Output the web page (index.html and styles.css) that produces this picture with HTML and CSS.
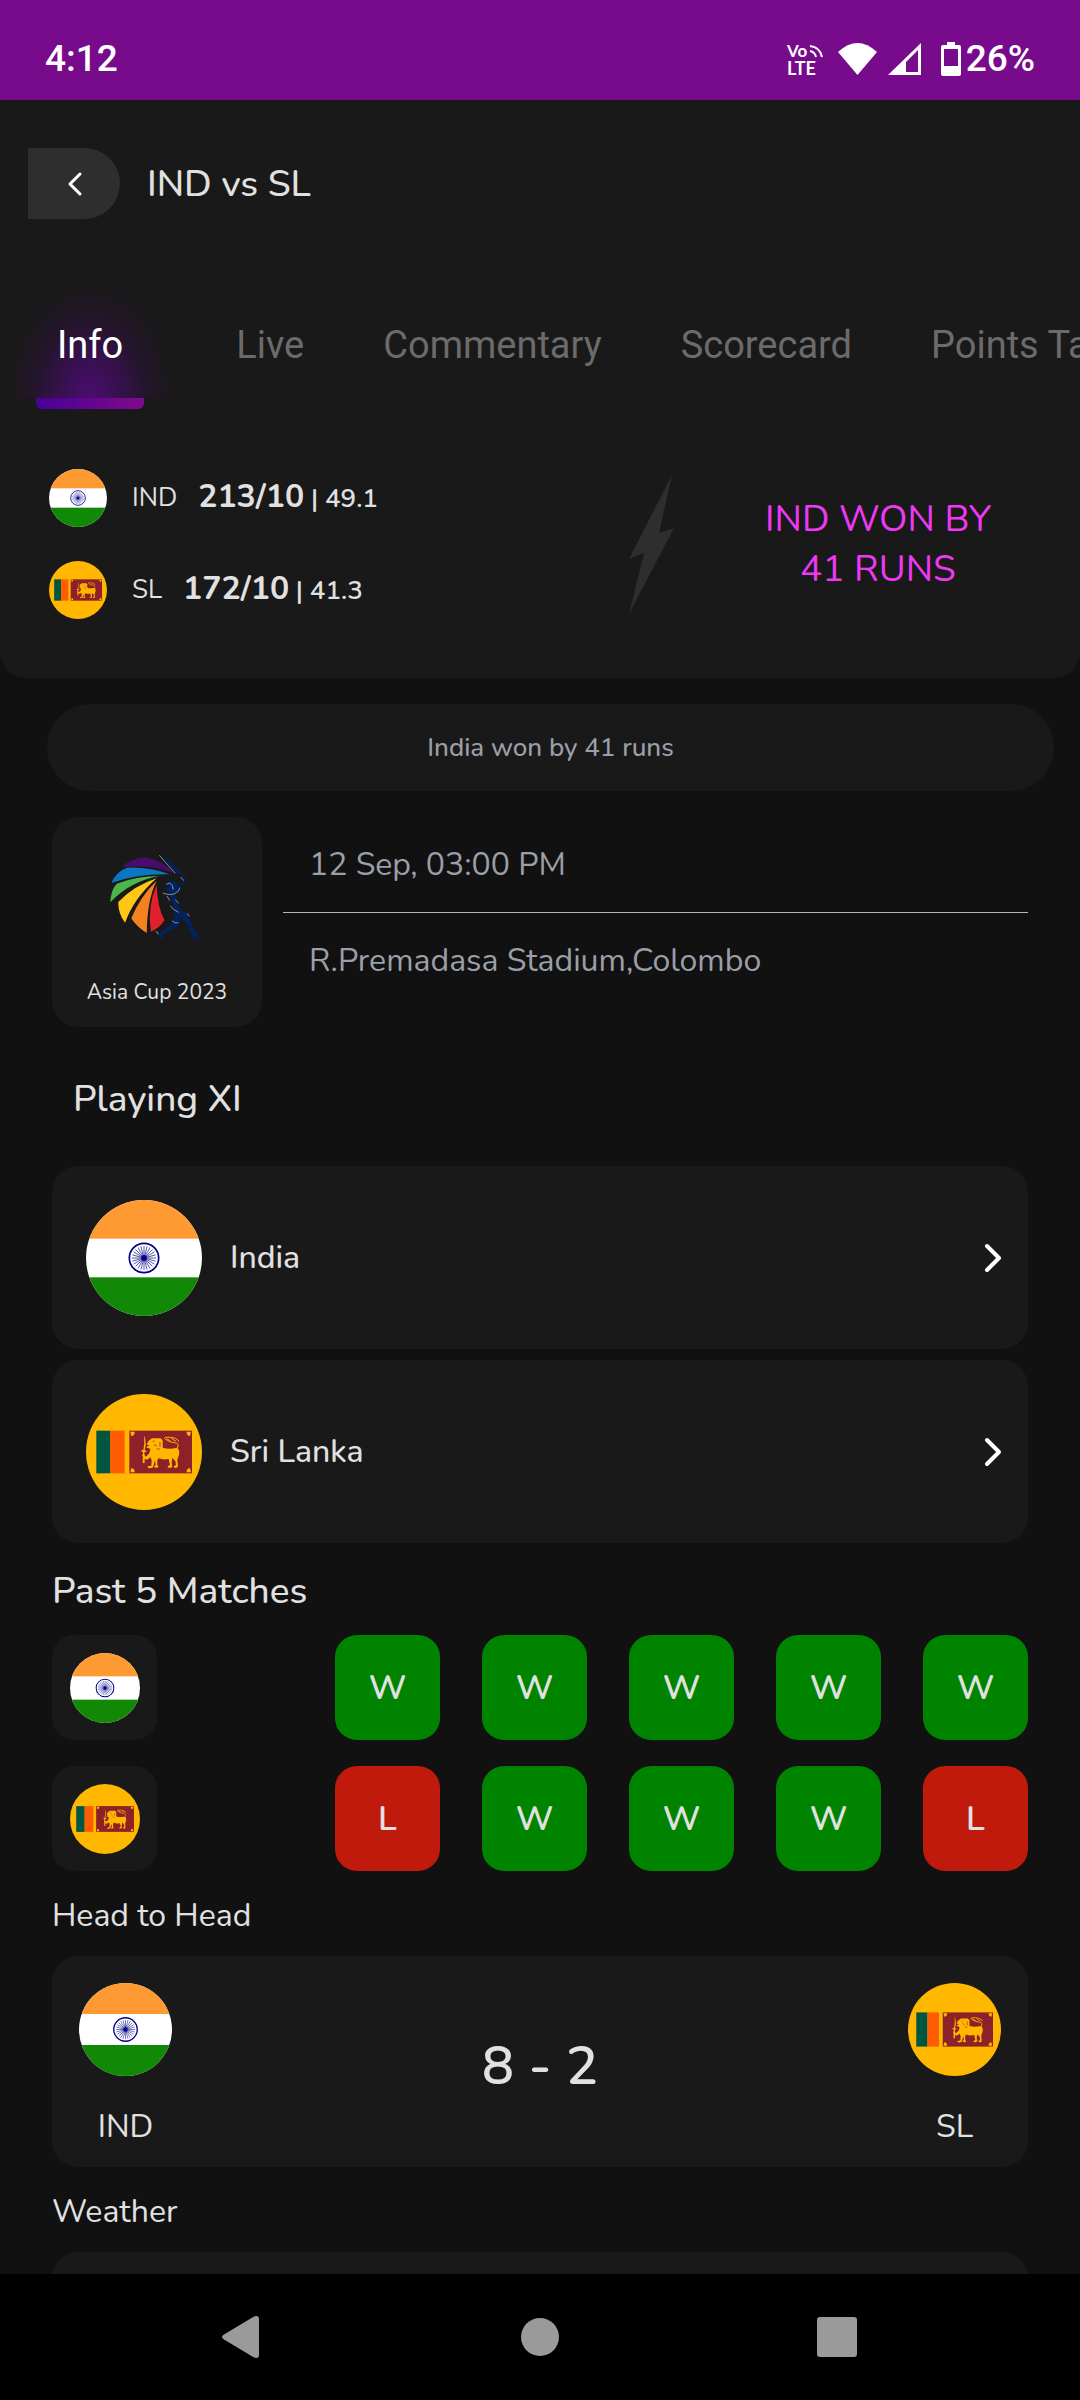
FILE: index.html
```html
<!DOCTYPE html>
<html lang="en">
<head>
<meta charset="utf-8">
<meta name="viewport" content="width=device-width, initial-scale=1">
<title>IND vs SL</title>
<link rel="stylesheet" href="styles.css">
</head>
<body>
<svg class="sprite" aria-hidden="true">
  <symbol id="flag-ind" viewBox="0 0 348 348">
    <clipPath id="round"><circle cx="174" cy="174" r="174"/></clipPath>
    <g clip-path="url(#round)">
      <rect width="348" height="348" fill="#fff"/>
      <rect width="348" height="116" fill="#ff9a33"/>
      <rect y="232" width="348" height="116" fill="#128807"/>
    </g>
    <g fill="none" stroke="#000088">
      <circle cx="174" cy="174" r="44" stroke-width="5"/>
      <path stroke-width="2" d="M138 174H210M174 138V210M139.200 164.700L208.800 183.300M142.800 156L205.200 192M148.500 148.500L199.500 199.500M156 142.800L192 205.200M164.700 139.200L183.300 208.800M183.300 139.200L164.700 208.800M192 142.800L156 205.200M199.500 148.500L148.500 199.500M205.200 156L142.800 192M208.800 164.700L139.200 183.300"/>
    </g>
    <circle cx="174" cy="174" r="8" fill="#000088"/>
  </symbol>
  <symbol id="flag-sl" viewBox="0 0 348 348">
    <circle cx="174" cy="174" r="174" fill="#ffb700"/>
    <rect x="31" y="110" width="42" height="128" fill="#005641"/>
    <rect x="73" y="110" width="43" height="128" fill="#ff5b00"/>
    <rect x="130" y="110" width="188" height="128" fill="#8d2029"/>
    <g fill="#ffb700">
      <path d="M133 113h13q1 12-10 13zM315 113h-13q-1 12 10 13zM133 235h13q1-12-10-13zM315 235h-13q-1-12 10-13z"/>
      <path d="M174 124q9 22 2 45l5 1v4l-6 1 1 32h-6l1-32-5-3 1-4 5 0q5-20 2-44z"/>
      <path d="M188 140l10-7 26 0 6 6 0 22q18 6 44 0 8 8 5 22l-5 14 2 20q-2 6-12 4v-5l6-3-2-12-9-9-2 14 2 12q-4 5-14 3l1-5 6-3-4-18q-18 3-30-2l-4 6v14l4 6q-6 4-14 1l2-5 3-2-2-14-4 14q0 9-8 9-8 2-11-2l4-4 8-1 1-16-4-9-10 7-10-3-5-12 6-1 5 7 10-9 4-11-3-5-9-2 3-4 6-2-8-4z"/>
    </g>
    <path d="M274 162q8-14-8-16-14-1-22-7-14-6-6-9 16-2 30 3 10 4 10 10M242 134l12 7M256 133l14 9" fill="none" stroke="#ffb700" stroke-width="3"/>
    <path d="M200 142h6M204 152l8 4M212 164l10 2M222 144v14" fill="none" stroke="#8d2029" stroke-width="2"/>
  </symbol>
</svg>

<div class="app">
  <header class="status">
    <span>4:12</span>
    <span class="status-icons">
      <svg class="volte" viewBox="0 0 36 32" aria-hidden="true">
        <g fill="#fff" font-family="Lato, sans-serif" font-weight="700"><text x="0" y="14" font-size="17">Vo</text><text x="0" y="32" font-size="18">LTE</text></g>
        <g fill="none" stroke="#fff" stroke-width="2"><path d="M23 8q5 1 6 6M23 3q10 1 12 11"/></g>
      </svg>
      <svg class="wifi" viewBox="0 0 39 32" aria-hidden="true"><path fill="#fff" d="M0 9Q19.500-9 39 9L19.500 32z"/></svg>
      <svg class="signal" viewBox="0 0 33 32" aria-hidden="true"><path fill="#fff" fill-rule="evenodd" d="M33 0V32H0zM30 7L18 19V29H30z"/></svg>
      <svg class="battery" viewBox="0 0 20 34" aria-hidden="true"><path fill="#fff" fill-rule="evenodd" d="M6 0h8v3h4q2 0 2 2v27q0 2-2 2H2q-2 0-2-2V5q0-2 2-2h4zM3 7v17h14V7z"/></svg>
      <span>26%</span>
    </span>
  </header>

  <div class="scroll">
    <section class="top">
      <div class="titlebar">
        <button class="back" aria-label="Back"><svg viewBox="0 0 14 22" aria-hidden="true"><path d="M12 1L2 11l10 10" fill="none" stroke="#fff" stroke-width="3" stroke-linecap="round" stroke-linejoin="round"/></svg></button>
        <h1>IND vs SL</h1>
      </div>
      <nav class="tabs" role="tablist">
        <button class="tab active" role="tab" aria-selected="true">Info</button>
        <button class="tab" role="tab">Live</button>
        <button class="tab" role="tab">Commentary</button>
        <button class="tab" role="tab">Scorecard</button>
        <button class="tab" role="tab">Points Table</button>
      </nav>
      <div class="summary">
        <div class="scores">
          <div class="score"><svg class="flag" role="img" aria-label="India"><use href="#flag-ind"/></svg><span class="code">IND</span><span><b>213/10</b> <span class="overs">| 49.1</span></span></div>
          <div class="score"><svg class="flag" role="img" aria-label="Sri Lanka"><use href="#flag-sl"/></svg><span class="code">SL</span><span><b>172/10</b> <span class="overs">| 41.3</span></span></div>
        </div>
        <svg class="bolt" viewBox="0 0 45 139" aria-hidden="true"><path d="M43 0L30 58 45 53 0 139 15 78 0 84z" fill="#2e2e2e"/></svg>
        <p class="result">IND WON BY 41 RUNS</p>
      </div>
    </section>

    <p class="pill">India won by 41 runs</p>

    <main class="content">
      <section class="match">
        <div class="series">
          <svg viewBox="322 160 274 258" preserveAspectRatio="none" aria-hidden="true">
            <path fill="#4b0b6b" d="M358 201Q384 173 430 174 476 182 510 221 448 194 358 201z"/>
            <path fill="#0b77c4" d="M326 250Q340 215 372 204 440 202 496 224 400 222 326 250z"/>
            <path fill="#4cb748" d="M323 308Q324 270 342 252 398 229 466 229 380 245 323 308z"/>
            <path fill="#ffc615" d="M346 307Q392 258 458 236 392 295 366 369 346 344 346 307z"/>
            <path fill="#f58220" d="M384 356Q410 290 458 243 430 300 429 400 400 382 384 356z"/>
            <path fill="#e0202a" d="M441 396Q430 320 458 255 460 322 481 362 466 386 441 396z"/>
            <path fill="#04215a" d="M464 164q8 1 16 12l34 43 8 3q9-5 10 2l2 10 8 9-8 2-5 12-4 17-15 9 7 16 0 12 12 20 20 12 8 22 14 28 8 21 19 6v3h-34l-4-3 2-7-13-36-20-22-4 1-1 19-11 9-36 20-1 15-6 2-8-19 10-6 34-28 7-32-10-26-6-28-12-11 1-16 10-10 17 0 7 8 6 8 14-10 4-14-8-13-42-44z"/>
            <path d="M466 167l46 54M528 232l9 11M476 280q20 8 34 2 14-6 16-18M486 254q10-8 18 4l2 12M496 303l-8-14M498 318q6 12 24 20M512 300l10 11M546 342l8 7M503 363q8 10 18 6M455 396q8 0 7 8" fill="none" stroke="#b8c9e6" stroke-width="2"/>
          </svg>
          <span>Asia Cup 2023</span>
        </div>
        <div class="facts"><p>12 Sep, 03:00 PM</p><p>R.Premadasa Stadium,Colombo</p></div>
      </section>

      <h2 class="inset">Playing XI</h2>
      <a class="card team" href="#india"><svg class="flag" aria-hidden="true"><use href="#flag-ind"/></svg><span>India</span><svg class="chevron" viewBox="0 0 18 30" aria-hidden="true"><path d="M3 3L15 15 3 27" fill="none" stroke="#fff" stroke-width="4" stroke-linecap="round" stroke-linejoin="round"/></svg></a>
      <a class="card team" href="#sri-lanka"><svg class="flag" aria-hidden="true"><use href="#flag-sl"/></svg><span>Sri Lanka</span><svg class="chevron" viewBox="0 0 18 30" aria-hidden="true"><path d="M3 3L15 15 3 27" fill="none" stroke="#fff" stroke-width="4" stroke-linecap="round" stroke-linejoin="round"/></svg></a>

      <h2>Past 5 Matches</h2>
      <div class="form">
        <div class="badge"><svg class="flag" role="img" aria-label="India"><use href="#flag-ind"/></svg></div>
        <ol><li>W</li><li>W</li><li>W</li><li>W</li><li>W</li></ol>
      </div>
      <div class="form">
        <div class="badge"><svg class="flag" role="img" aria-label="Sri Lanka"><use href="#flag-sl"/></svg></div>
        <ol><li class="loss">L</li><li>W</li><li>W</li><li>W</li><li class="loss">L</li></ol>
      </div>

      <h3>Head to Head</h3>
      <section class="card versus">
        <div class="side"><svg class="flag" aria-hidden="true"><use href="#flag-ind"/></svg><span>IND</span></div>
        <strong>8 - 2</strong>
        <div class="side"><svg class="flag" aria-hidden="true"><use href="#flag-sl"/></svg><span>SL</span></div>
      </section>

      <h3>Weather</h3>
      <section class="card weather"></section>
    </main>
  </div>

  <nav class="system">
    <button aria-label="Back"><svg viewBox="0 0 42 42" aria-hidden="true"><path d="M2 18.500Q-2 21 2 23.500L32 41.500Q37 43 37 39V3Q37-1 32 .5z" fill="#9a9a9a"/></svg></button>
    <button aria-label="Home"><svg viewBox="0 0 42 42" aria-hidden="true"><circle cx="21" cy="21" r="19" fill="#9a9a9a"/></svg></button>
    <button aria-label="Recent apps"><svg viewBox="0 0 42 42" aria-hidden="true"><rect x="1" y="1" width="40" height="40" rx="3" fill="#9a9a9a"/></svg></button>
  </nav>
</div>
</body>
</html>
```
FILE: styles.css
```css
* { box-sizing: border-box; }
body, h1, h2, h3, p, ol { margin: 0; padding: 0; }
body {
  background: #111;
  color: #e1e1e1;
  font-family: Nunito, Lato, sans-serif;
  font-size: 32px;
  line-height: 44px;
}
h1, h2 { font-size: 37px; font-weight: 500; line-height: 52px; }
h3 { font-size: 32px; font-weight: 400; line-height: 44px; }
button { border: 0; padding: 0; background: none; color: inherit; font: inherit; }
a { color: inherit; text-decoration: none; }
svg { display: block; flex: none; }
.sprite { position: absolute; width: 0; height: 0; }

.app { display: flex; flex-direction: column; height: 100vh; }
.scroll { flex: 1; min-height: 0; overflow-y: auto; overflow-x: hidden; scrollbar-width: none; }

.status {
  display: flex;
  justify-content: space-between;
  align-items: flex-end;
  flex: none;
  height: 100px;
  padding: 0 45px 20px;
  background: #780b8c;
  color: #fff;
  font: 500 37px/42px Roboto, sans-serif;
}
.status-icons { display: flex; align-items: center; }
.volte { width: 36px; height: 32px; margin-right: 15px; overflow: visible; }
.wifi { width: 39px; height: 32px; margin-right: 11px; }
.signal { width: 33px; height: 32px; margin-right: 20px; }
.battery { width: 20px; height: 34px; margin-right: 5px; }

.top { background: #191919; border-radius: 0 0 26px 26px; padding-bottom: 59px; }
.titlebar { display: flex; align-items: center; gap: 27px; padding: 48px 28px 0; }
.back {
  display: flex;
  justify-content: flex-end;
  align-items: center;
  width: 92px;
  height: 71px;
  padding-right: 38px;
  background: #2e2e2e;
  border-radius: 0 36px 36px 0;
}
.back svg { width: 14px; height: 22px; overflow: visible; }

.tabs { display: flex; gap: 37px; height: 190px; padding-left: 36px; overflow: hidden; }
.tab {
  position: relative;
  flex: none;
  padding: 62px 21px 0;
  color: #6b6b6b;
  font: 400 38px/44px Roboto, sans-serif;
  white-space: nowrap;
}
.active { margin-right: 34px; color: #fff; isolation: isolate; }
.active::before {
  content: "";
  position: absolute;
  z-index: -1;
  left: -36px;
  right: -36px;
  bottom: 11px;
  height: 120px;
  background: radial-gradient(ellipse 84px 116px at 50% 100%, #4b0d70 0, #3a1055 30%, #24152c 65%, #191919 100%);
}
.active::after {
  content: "";
  position: absolute;
  left: 0;
  right: 0;
  bottom: 0;
  height: 11px;
  border-radius: 0 0 6px 6px;
  background: linear-gradient(90deg, #480096, #7e0b8b);
}

.summary { display: flex; align-items: center; padding: 60px 48px 0 49px; }
.scores { display: flex; flex-direction: column; gap: 34px; flex: 1; }
.score { display: flex; align-items: center; font-size: 26px; white-space: nowrap; }
.score .flag { width: 58px; height: 58px; margin-right: 25px; }
.code { margin-right: 21px; }
.score b { font-size: 32px; }
.overs { font-weight: 600; }
.bolt { width: 45px; height: 139px; }
.result { width: 244px; margin: 0 32px 0 82px; color: #ee38f5; font-size: 37px; line-height: 50px; text-align: center; }

.pill {
  margin: 26px 26px 0 47px;
  padding: 25px;
  background: #191919;
  border-radius: 44px;
  color: #9a9fa8;
  font-size: 26px;
  font-weight: 500;
  line-height: 37px;
  text-align: center;
}
.content { padding: 26px 52px 0; }
.match { display: flex; gap: 21px; }
.series {
  display: flex;
  flex-direction: column;
  align-items: center;
  flex: none;
  width: 210px;
  height: 210px;
  padding-top: 36px;
  background: #191919;
  border-radius: 26px;
  font-size: 21px;
  line-height: 30px;
}
.series svg { width: 94px; height: 86px; margin-bottom: 38px; }
.facts { flex: 1; color: #9a9fa8; }
.facts p { padding: 25px 26px; line-height: 45px; }
.facts p:first-child { border-bottom: 1px solid #b5b9b9; }
.inset { padding: 0 21px; margin: 46px 0 41px; }

.card { background: #191919; border-radius: 26px; }
.team { display: flex; align-items: center; height: 183px; margin-bottom: 11px; padding: 0 26px 0 34px; }
.team span { font-weight: 500; }
.team .flag { width: 116px; height: 116px; margin-right: 28px; }
.team .chevron { width: 18px; height: 30px; margin-left: auto; }
.team + h2 { margin: 22px 0 18px; }

.form { display: flex; justify-content: space-between; }
.form + .form { margin-top: 26px; }
.form ol { display: flex; gap: 42px; list-style: none; }
.form li, .badge {
  display: flex;
  justify-content: center;
  align-items: center;
  width: 105px;
  height: 105px;
  border-radius: 22px;
  background: #008400;
  font-size: 34px;
  font-weight: 600;
}
.form .loss { background: #c01a0c; }
.form .badge { background: #191919; }
.badge .flag { width: 70px; height: 70px; }
h3 { margin: 23px 0 18px; }

.versus { display: flex; justify-content: space-between; align-items: center; height: 211px; padding: 8px 27px 0; }
.versus strong { font-size: 54px; font-weight: 600; }
.side { display: flex; flex-direction: column; align-items: center; gap: 29px; }
.side .flag { width: 93px; height: 93px; }
.weather { height: 211px; }

.system { display: flex; justify-content: space-around; align-items: center; flex: none; height: 126px; padding: 0 94px; background: #000; }
.system svg { width: 42px; height: 42px; }
```
